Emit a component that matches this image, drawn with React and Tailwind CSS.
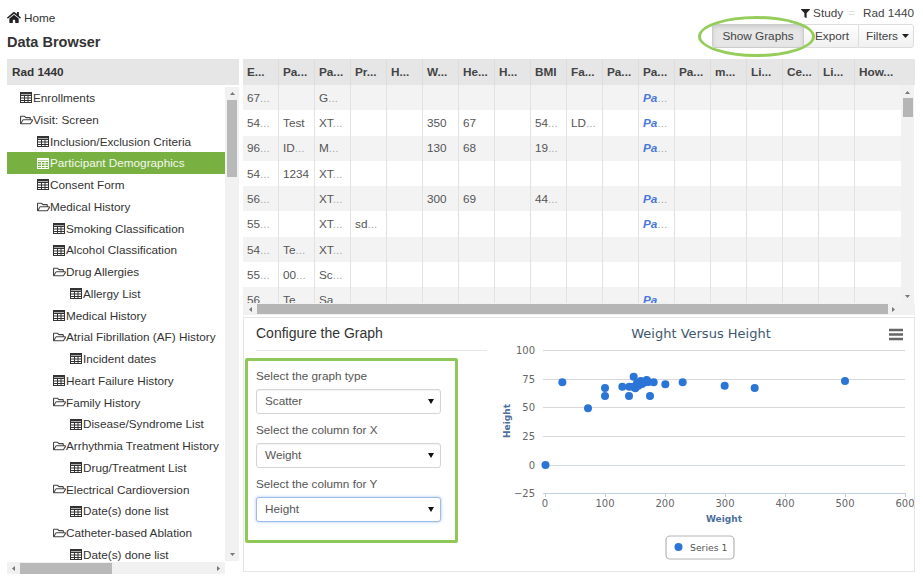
import React from "react";
import { FaHome, FaFilter, FaRegFolderOpen } from "react-icons/fa";

const TableIcon = ({ light }) => (
  <svg width="13" height="11" viewBox="0 0 13 11" className="shrink-0">
    <g fill="none" stroke={light ? "#ffffff" : "#333333"} strokeWidth="1">
      <rect x="0.5" y="0.5" width="11" height="10" />
      <path d="M0 3.5H12M0 6H12M0 8.5H12M4.5 3V11M8 3V11" />
    </g>
    <rect x="0" y="0" width="12" height="2.4" fill={light ? "#ffffff" : "#333333"} />
  </svg>
);

const indent = ["pl-[13px]", "pl-[30px]", "pl-[46px]", "pl-[63px]"];

const tree = [
  [0, "t", "Enrollments"],
  [0, "f", "Visit: Screen"],
  [1, "t", "Inclusion/Exclusion Criteria"],
  [1, "t", "Participant Demographics", true],
  [1, "t", "Consent Form"],
  [1, "f", "Medical History"],
  [2, "t", "Smoking Classification"],
  [2, "t", "Alcohol Classification"],
  [2, "f", "Drug Allergies"],
  [3, "t", "Allergy List"],
  [2, "t", "Medical History"],
  [2, "f", "Atrial Fibrillation (AF) History"],
  [3, "t", "Incident dates"],
  [2, "t", "Heart Failure History"],
  [2, "f", "Family History"],
  [3, "t", "Disease/Syndrome List"],
  [2, "f", "Arrhythmia Treatment History"],
  [3, "t", "Drug/Treatment List"],
  [2, "f", "Electrical Cardioversion"],
  [3, "t", "Date(s) done list"],
  [2, "f", "Catheter-based Ablation"],
  [3, "t", "Date(s) done list"],
];

const heads = ["E...", "Pa...", "Pa...", "Pr...", "H...", "W...", "He...", "H...", "BMI", "Fa...", "Pa...", "Pa...", "Pa...", "m...", "Li...", "Ce...", "Li...", "How..."];

const rows = [
  { 0: "67...", 2: "G...", 11: "B" },
  { 0: "54...", 1: "Test", 2: "XT...", 5: "350", 6: "67", 8: "54...", 9: "LD...", 11: "B" },
  { 0: "96...", 1: "ID...", 2: "M...", 5: "130", 6: "68", 8: "19...", 11: "B" },
  { 0: "54...", 1: "1234", 2: "XT..." },
  { 0: "56...", 2: "XT...", 5: "300", 6: "69", 8: "44...", 11: "B" },
  { 0: "55...", 2: "XT...", 3: "sd...", 11: "B" },
  { 0: "54...", 1: "Te...", 2: "XT..." },
  { 0: "55...", 1: "00...", 2: "Sc..." },
  { 0: "56", 1: "Te", 2: "Sa", 11: "B" },
];

const Cell = ({ v }) => {
  if (v === "B")
    return (
      <span>
        <b className="italic text-[#4a78d8]">Pa</b>
        <span className="text-[#aaa]">...</span>
      </span>
    );
  if (typeof v === "string" && v.endsWith("..."))
    return (
      <span>
        {v.slice(0, -3)}
        <span className="text-[#aaa]">...</span>
      </span>
    );
  return v ?? null;
};

const Tri = ({ d, cls }) => (
  <svg width="7" height="7" viewBox="0 0 7 7" className={cls}>
    <path d={d} fill="#777777" />
  </svg>
);
const UP = "M3.5 2L6 5H1Z";
const DOWN = "M1 2H6L3.5 5Z";
const LEFT = "M2 3.5L5 1V6Z";
const RIGHT = "M5 3.5L2 1V6Z";

const Select = ({ value, focus }) => (
  <div
    className={
      "h-[25px] w-[185px] flex items-center justify-between pl-[8px] pr-[6px] pb-[1px] rounded-[3px] border text-[11.75px] text-[#555] bg-white " +
      (focus ? "border-[#9dbde8] shadow-[0_0_3px_rgba(102,150,230,0.6)]" : "border-[#d5d5d5] shadow-[inset_0_1px_1px_rgba(0,0,0,0.05)]")
    }
  >
    <span>{value}</span>
    <svg width="6" height="5" viewBox="0 0 6 5"><path d="M0 0H6L3 5Z" fill="#111" /></svg>
  </div>
);

const pts = [[217,187],[294,265],[345,204],[345,228],[397,200],[417,228],[418,200],[431,170],[436,205],[430,200],[441,190],[445,197],[452,183],[456,192],[470,180],[465,187],[475,186],[480,228],[491,187],[526,193],[578,187],[704,197],[794,204],[1065,183]];

const Chart = () => {
  const font = "'DejaVu Sans', sans-serif";
  const gy = [[350, "100"], [379, "75"], [407, "50"], [436, "25"], [465, "0"], [493, "−25"]];
  const gx = [[545, "0"], [605, "100"], [665, "200"], [725, "300"], [785, "400"], [845, "500"], [905, "600"]];
  return (
    <svg width="424" height="254" viewBox="490 318 424 254" className="block" style={{ fontFamily: font }}>
      <text x="701" y="337.5" textAnchor="middle" fontSize="13" fill="#3e576f">Weight Versus Height</text>
      <path d="M889 330H903M889 334.5H903M889 339H903" stroke="#666" strokeWidth="2.4" />
      {gy.map(([y, l]) => (
        <g key={l}>
          <line x1="543" x2="905" y1={y + 0.5} y2={y + 0.5} stroke={y === 493 ? "#c0d0e0" : y === 465 ? "#d5dbe3" : "#d8d8d8"} />
          <text x="535" y={y + 4} textAnchor="end" fontSize="10" fill="#666">{l}</text>
        </g>
      ))}
      {gx.map(([x, l]) => (
        <g key={l}>
          <line x1={x + 0.5} x2={x + 0.5} y1="493" y2="497" stroke="#c0d0e0" />
          <text x={x} y="506.5" textAnchor="middle" fontSize="10" fill="#666">{l}</text>
        </g>
      ))}
      <text transform="translate(510 421) rotate(-90)" textAnchor="middle" fontSize="9" fontWeight="700" fill="#4d6f9c">Height</text>
      <text x="724" y="521.5" textAnchor="middle" fontSize="9" fontWeight="700" fill="#4d6f9c">Weight</text>
      {pts.map(([x, y], i) => (
        <circle key={i} cx={490 + x / 3} cy={320 + y / 3} r="4" fill="#2a75d6" />
      ))}
      <circle cx="545.5" cy="465" r="4" fill="#2a75d6" />
      <rect x="666" y="536" width="68" height="23" rx="4" fill="#fff" stroke="#b5b5b5" strokeWidth="1.2" />
      <circle cx="678.5" cy="547" r="4" fill="#2a75d6" />
      <text x="690" y="550.5" fontSize="9.3" fill="#555">Series 1</text>
    </svg>
  );
};

export default function App() {
  return (
    <div className="relative w-[923px] h-[582px] overflow-hidden bg-white text-[11.75px] text-[#333] font-['Liberation_Sans',Arial,sans-serif]">
      {/* Top bar */}
      <div className="flex justify-between h-[59px] pl-[7px] pr-[9px]">
        <div className="flex flex-col">
          <div className="flex items-center gap-[3px] mt-[10px] h-[15px]">
            <FaHome className="text-[#222] w-[14px] h-[13px]" />
            <span>Home</span>
          </div>
          <div className="mt-[9px] text-[14.5px] font-bold leading-[17px]">Data Browser</div>
        </div>
        <div className="flex flex-col items-end">
          <div className="flex items-center h-[14px] mt-[6px] text-[#444]">
            <FaFilter className="w-[9px] h-[9px] text-[#222] mr-[3px]" />
            <span>Study</span>
            <span className="text-[#ddd] ml-[5px] mr-[8px]">=</span>
            <span>Rad 1440</span>
          </div>
          <div className="flex mt-[4px] h-[24px] text-[#444]">
            <div className="w-[92px] flex items-center justify-center bg-[#e6e6e6] border border-[#ccc] rounded-l-[3px] shadow-[inset_0_2px_4px_rgba(0,0,0,0.12)]">Show Graphs</div>
            <div className="w-[54px] flex items-center justify-center pl-[2px] bg-gradient-to-b from-white to-[#f0f0f0] border-y border-[#ddd]">Export</div>
            <div className="w-[56px] flex items-center justify-center pl-[3px] gap-[4px] bg-gradient-to-b from-white to-[#f0f0f0] border border-[#ddd] rounded-r-[3px]">
              Filters
              <svg width="7" height="4" viewBox="0 0 7 4"><path d="M0 0H7L3.5 4Z" fill="#222" /></svg>
            </div>
          </div>
        </div>
      </div>

      {/* Main */}
      <div className="flex pl-[7px] gap-[4px]">
        {/* Left tree */}
        <div className="w-[232px] h-[515px] flex flex-col">
          <div className="h-[26px] bg-[#e6e6e6] flex items-center pl-[5px] font-bold text-[#333]">Rad 1440</div>
          <div className="flex h-[474px] mt-[2px]">
            <div className="w-[218px] overflow-hidden">
              {tree.map(([lvl, type, label, sel], i) => (
                <div
                  key={i}
                  className={"h-[21.75px] flex items-center whitespace-nowrap " + indent[lvl] + (sel ? " bg-[#79b042] text-[#f4f8ee]" : " text-[#333]")}
                >
                  {type === "t" ? <TableIcon light={sel} /> : <FaRegFolderOpen className="w-[13px] h-[12px] shrink-0 text-[#444]" />}
                  <span>{label}</span>
                </div>
              ))}
            </div>
            <div className="w-[14px] bg-[#f1f1f1] flex flex-col items-center">
              <Tri d={UP} cls="mt-[3px]" />
              <div className="w-[10px] h-[77px] mt-[3px] bg-[#b9b9b9]" />
              <div className="flex-1" />
              <Tri d={DOWN} cls="mb-[3px]" />
            </div>
          </div>
          <div className="flex h-[12px] mt-[1px]">
            <div className="w-[218px] bg-[#f1f1f1] flex items-center">
              <Tri d={LEFT} cls="ml-[3px]" />
              <div className="w-[92px] h-[11px] ml-[3px] bg-[#b9b9b9]" />
              <div className="flex-1" />
              <Tri d={RIGHT} cls="mr-[3px]" />
            </div>
          </div>
        </div>

        {/* Right */}
        <div className="w-[672px] flex flex-col">
          <div className="h-[256px] overflow-hidden">
            <div className="flex h-[26px] bg-[#e6e6e6] font-bold text-[#444]">
              {heads.map((h, i) => (
                <div key={i} className={"flex items-center pl-[4px] border-r border-[#dcdcdc] last:border-r-0 " + (i === 17 ? "w-[59px]" : "w-[36px]")}>
                  {h}
                </div>
              ))}
            </div>
            <div className="flex h-[218px]">
              <div className="w-[658px] overflow-hidden">
                {rows.map((r, ri) => (
                  <div key={ri} className={"flex h-[25.3px] shrink-0 text-[#555] " + (ri % 2 === 0 ? "bg-[#f3f3f3]" : "bg-white")}>
                    {heads.map((_, ci) => (
                      <div key={ci} className={"flex items-center pl-[4px] border-r border-[#e2e2e2] last:border-r-0 " + (ci === 17 ? "w-[46px]" : "w-[36px]")}>
                        <Cell v={r[ci]} />
                      </div>
                    ))}
                  </div>
                ))}
              </div>
              <div className="w-[13px] bg-[#f1f1f1] flex flex-col items-center">
                <Tri d={UP} cls="mt-[4px]" />
                <div className="w-[10px] h-[19px] mt-[2px] bg-[#b5b5b5]" />
                <div className="flex-1" />
                <Tri d={DOWN} cls="mb-[3px]" />
              </div>
            </div>
            <div className="flex h-[12px] bg-[#f1f1f1] items-center">
              <Tri d={LEFT} cls="ml-[4px]" />
              <div className="w-[631px] h-[10px] ml-[3px] bg-[#b5b5b5]" />
              <Tri d={RIGHT} cls="ml-[2px]" />
            </div>
          </div>
          <div className="mt-[2px] h-[255px] border border-[#e6e6e6] flex">
            <div className="w-[246px] shrink-0">
              <div className="h-[33px] ml-[12px] mr-0 border-b border-[#e6e6e6] w-[231px] text-[14px] text-[#333] pt-[7px] leading-[17px]">Configure the Graph</div>
              <div className="w-[213px] h-[185px] ml-[1px] mt-[7px] border-[3px] border-[#8fc75a] rounded-[2px] pl-[8px] pt-[8px]">
                <div className="leading-[14px] text-[#555] mb-[6px]">Select the graph type</div>
                <Select value="Scatter" />
                <div className="leading-[14px] text-[#555] mt-[9px] mb-[6px]">Select the column for X</div>
                <Select value="Weight" />
                <div className="leading-[14px] text-[#555] mt-[9px] mb-[6px]">Select the column for Y</div>
                <Select value="Height" focus />
              </div>
            </div>
            <Chart />
          </div>
        </div>
      </div>

      {/* Highlight ellipse */}
      <div className="absolute left-[698px] top-[16px] w-[117px] h-[41px] rounded-[50%] border-[3px] border-[#96cc5a]" />
    </div>
  );
}
